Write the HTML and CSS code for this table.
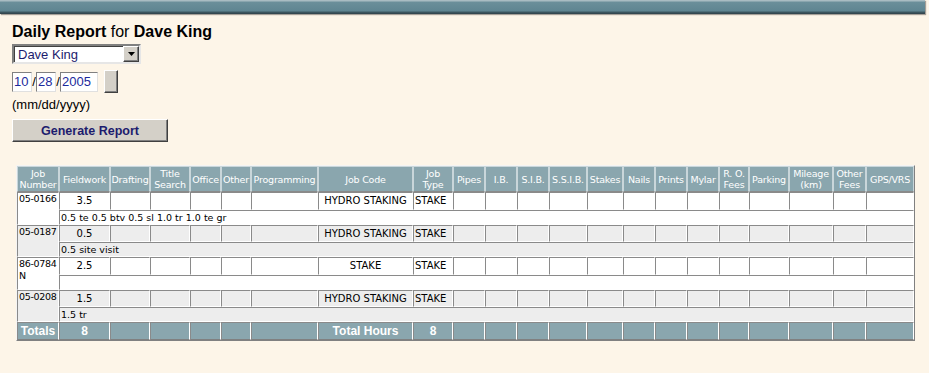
FILE: index.html
```html
<!DOCTYPE html>
<html lang="en">
<head>
    <meta charset="UTF-8">
    <title>Daily Report</title>
    <link rel="stylesheet" href="styles.css">
</head>
<body>

    <div class="topbar"></div>

    <div class="content">

        <h1 class="title"><b>Daily Report</b> for <b>Dave King</b></h1>

        <div class="picker">
            <span class="picker-text">Dave King</span>
            <span class="picker-arrow">
                <svg width="7" height="4" viewBox="0 0 7 4"><path d="M0 0h7L3.5 4z" fill="#000"/></svg>
            </span>
        </div>

        <div class="date-row">
            <input class="date-box dd" type="text" value="10">
            <span class="slash">/</span>
            <input class="date-box dd" type="text" value="28">
            <span class="slash">/</span>
            <input class="date-box yyyy" type="text" value="2005">
            <button class="cal-btn" type="button"></button>
        </div>

        <div class="hint">(mm/dd/yyyy)</div>

        <button class="gen-btn" type="button">Generate Report</button>

        <table class="report">
            <colgroup>
                <col style="width:42px"><col style="width:51px"><col style="width:40px"><col style="width:40px">
                <col style="width:31px"><col style="width:30px"><col style="width:67px"><col style="width:95px">
                <col style="width:40px"><col style="width:32px"><col style="width:32px"><col style="width:32px">
                <col style="width:38px"><col style="width:36px"><col style="width:32px"><col style="width:32px">
                <col style="width:32px"><col style="width:30px"><col style="width:40px"><col style="width:44px">
                <col style="width:33px"><col style="width:48px">
            </colgroup>
            <thead>
                <tr>
                    <th>Job<br>Number</th>
                    <th>Fieldwork</th>
                    <th>Drafting</th>
                    <th>Title<br>Search</th>
                    <th>Office</th>
                    <th>Other</th>
                    <th>Programming</th>
                    <th>Job Code</th>
                    <th>Job<br>Type</th>
                    <th>Pipes</th>
                    <th>I.B.</th>
                    <th>S.I.B.</th>
                    <th>S.S.I.B.</th>
                    <th>Stakes</th>
                    <th>Nails</th>
                    <th>Prints</th>
                    <th>Mylar</th>
                    <th>R. O.<br>Fees</th>
                    <th>Parking</th>
                    <th>Mileage<br>(km)</th>
                    <th>Other<br>Fees</th>
                    <th>GPS/VRS</th>
                </tr>
            </thead>
            <tbody>
                <tr class="job">
                    <td class="job-no" rowspan="2">05-0166</td>
                    <td class="mid">3.5</td>
                    <td></td><td></td><td></td><td></td><td></td>
                    <td class="mid">HYDRO STAKING</td>
                    <td>STAKE</td>
                    <td></td><td></td><td></td><td></td><td></td><td></td><td></td><td></td><td></td><td></td><td></td><td></td><td></td>
                </tr>
                <tr class="note">
                    <td colspan="21">0.5 te 0.5 btv 0.5 sl 1.0 tr 1.0 te gr</td>
                </tr>

                <tr class="job alt">
                    <td class="job-no" rowspan="2">05-0187</td>
                    <td class="mid">0.5</td>
                    <td></td><td></td><td></td><td></td><td></td>
                    <td class="mid">HYDRO STAKING</td>
                    <td>STAKE</td>
                    <td></td><td></td><td></td><td></td><td></td><td></td><td></td><td></td><td></td><td></td><td></td><td></td><td></td>
                </tr>
                <tr class="note alt">
                    <td colspan="21">0.5 site visit</td>
                </tr>

                <tr class="job">
                    <td class="job-no" rowspan="2">86-0784<br>N</td>
                    <td class="mid">2.5</td>
                    <td></td><td></td><td></td><td></td><td></td>
                    <td class="mid">STAKE</td>
                    <td>STAKE</td>
                    <td></td><td></td><td></td><td></td><td></td><td></td><td></td><td></td><td></td><td></td><td></td><td></td><td></td>
                </tr>
                <tr class="note">
                    <td colspan="21"></td>
                </tr>

                <tr class="job alt">
                    <td class="job-no" rowspan="2">05-0208</td>
                    <td class="mid">1.5</td>
                    <td></td><td></td><td></td><td></td><td></td>
                    <td class="mid">HYDRO STAKING</td>
                    <td>STAKE</td>
                    <td></td><td></td><td></td><td></td><td></td><td></td><td></td><td></td><td></td><td></td><td></td><td></td><td></td>
                </tr>
                <tr class="note alt">
                    <td colspan="21">1.5 tr</td>
                </tr>
            </tbody>
            <tfoot>
                <tr>
                    <td>Totals</td>
                    <td>8</td>
                    <td></td><td></td><td></td><td></td><td></td>
                    <td>Total Hours</td>
                    <td>8</td>
                    <td></td><td></td><td></td><td></td><td></td><td></td><td></td><td></td><td></td><td></td><td></td><td></td><td></td>
                </tr>
            </tfoot>
        </table>

    </div>

</body>
</html>
```

FILE: styles.css
```css
* {
    box-sizing: border-box;
}

:root {
    --cream: #fdf5e8;
    --steel: #8aa6ae;
    --navy: #1c1c6e;
    --face: #d4d0c8;
    --line: #8a8a8a;
    --alt: #ededed;
}

body {
    margin: 0;
    background-color: var(--cream);
    font-family: "Liberation Sans", Arial, sans-serif;
    color: #000;
}

.topbar {
    height: 14px;
    margin-right: 4px;
    background: linear-gradient(#a9bcc2 0, #a9bcc2 1px, #6b8f9a 2px, #5f8591 11px, #3f5a63 12px, #2f4048 14px);
    box-shadow: 1px 1px 1px rgba(0, 0, 0, 0.35);
}

.content {
    padding: 8px 12px;
}

.title {
    margin: 0;
    font-size: 16px;
    line-height: 20px;
    font-weight: normal;
}

.title b {
    font-weight: bold;
}

/* windows style dropdown */
.picker {
    margin-top: 2px;
    width: 129px;
    height: 20px;
    display: flex;
    align-items: center;
    background: #fff;
    border: 2px solid;
    border-color: #808080 #e6e6e6 #e6e6e6 #808080;
    box-shadow: inset 1px 1px 0 #404040;
}

.picker-text {
    flex: 1;
    padding-left: 4px;
    font-size: 13px;
    color: var(--navy);
}

.picker-arrow {
    width: 16px;
    height: 16px;
    display: flex;
    align-items: center;
    justify-content: center;
    background: var(--face);
    border: 1px solid;
    border-color: #fff #404040 #404040 #fff;
    box-shadow: inset -1px -1px 0 #808080;
}

.date-row {
    margin-top: 6px;
    display: flex;
    align-items: center;
    height: 23px;
}

.date-box {
    height: 20px;
    padding: 0 1px;
    font-family: "Liberation Sans", Arial, sans-serif;
    font-size: 13px;
    color: #1c2a9c;
    background: #fff;
    border: 1px solid;
    border-color: #808080 #e0e0e0 #e0e0e0 #808080;
    outline: 0;
}

.date-box.dd {
    width: 20px;
}

.date-box.yyyy {
    width: 38px;
}

.slash {
    width: 4px;
    font-size: 13px;
    text-align: center;
}

.cal-btn {
    margin-left: 6px;
    width: 14px;
    height: 23px;
    padding: 0;
    background: var(--face);
    border: 1px solid;
    border-color: #fff #404040 #404040 #fff;
    box-shadow: inset -1px -1px 0 #808080;
}

.hint {
    margin-top: 4px;
    font-size: 13px;
    line-height: 15px;
}

.gen-btn {
    margin-top: 7px;
    display: block;
    width: 156px;
    height: 23px;
    padding: 0;
    font-family: "Liberation Sans", Arial, sans-serif;
    font-size: 12.5px;
    font-weight: bold;
    color: var(--navy);
    background: var(--face);
    border: 1px solid;
    border-color: #fff #404040 #404040 #fff;
    box-shadow: inset -1px -1px 0 #808080;
}

.report {
    margin: 23px 0 0 4px;
    width: 898px;
    table-layout: fixed;
    border-collapse: separate;
    border-spacing: 0;
    border: 1px solid;
    border-color: #f4f4f4 #808080 #808080 #f4f4f4;
    font-family: "DejaVu Sans", Verdana, sans-serif;
    font-size: 9.5px;
}

.report th,
.report td {
    border: 1px solid;
    border-color: var(--line) #fff #fff var(--line);
    padding: 0 1px;
    overflow: hidden;
    white-space: nowrap;
}

.report th {
    height: 26px;
    padding: 0;
    background: var(--steel);
    color: #fff;
    font-weight: normal;
    letter-spacing: -0.2px;
    line-height: 11px;
    text-align: center;
    border-color: #c9d6da #c9d6da var(--line) #c9d6da;
}

.report tr.job {
    height: 18px;
}

.report tr.job.alt {
    height: 17px;
}

.report tr.note {
    height: 15px;
}

.report .job td {
    background: #fff;
    font-size: 10px;
    line-height: 12px;
}

.report .note td {
    background: #fff;
    line-height: 11px;
}

.report .alt td {
    background: var(--alt);
}

.report td.job-no {
    vertical-align: top;
    font-size: 9.5px;
    letter-spacing: -0.3px;
    line-height: 12px;
}

.report td.mid {
    text-align: center;
}

.report tfoot tr {
    height: 18px;
}

.report tfoot td {
    background: var(--steel);
    color: #fff;
    font-family: "Liberation Sans", Arial, sans-serif;
    font-size: 12px;
    font-weight: bold;
    text-align: center;
    line-height: 13px;
    border-color: var(--line) #fff #808080 var(--line);
}
```
